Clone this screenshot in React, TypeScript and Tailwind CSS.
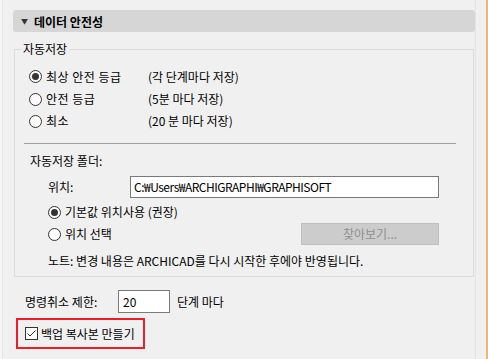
import React from "react";

const font = { fontFamily: '"Noto Sans CJK KR", "Liberation Sans", sans-serif' };

const Radio: React.FC<{ checked?: boolean }> = ({ checked }) => (
  <span className="w-[13px] h-[13px] rounded-full border border-[#333] bg-white flex items-center justify-center shrink-0">
    {checked && <span className="w-[7px] h-[7px] rounded-full bg-[#333]"></span>}
  </span>
);

const App: React.FC = () => {
  return (
    <div
      className="w-[488px] h-[359px] bg-[#f0f0f0] flex text-[12px] leading-[16px] text-black overflow-hidden"
      style={font}
    >
      <div className="w-[3px] h-full bg-[#f6f6f6] border-r border-[#e6e6e6]"></div>
      <div className="w-[473px] border-r border-[#e4e4e4] pl-[10px]">
        {/* Section header */}
        <div className="mt-[10px] h-[22px] w-[462px] bg-[#d6d6d6] rounded-[3px] flex items-center pt-[1px]">
          <span className="ml-[8px] text-[7px] leading-none text-[#333]">▼</span>
          <span className="ml-[6px] font-bold text-[12px]">데이터 안전성</span>
        </div>

        {/* Autosave group */}
        <fieldset className="mt-[9px] ml-[1px] w-[460px] h-[236px] border border-[#dcdcdc] p-0">
          <legend className="ml-[6px] px-[2px] leading-[16px]">자동저장</legend>
          <div className="mt-[8px] ml-[14px] flex flex-col">
            <div className="h-[23px] flex items-center">
              <Radio checked />
              <span className="ml-[4px] w-[102px] tracking-[0.5px]">최상 안전 등급</span>
              <span>(각 단계마다 저장)</span>
            </div>
            <div className="h-[22px] flex items-center">
              <Radio />
              <span className="ml-[4px] w-[102px] tracking-[0.5px]">안전 등급</span>
              <span>(5분 마다 저장)</span>
            </div>
            <div className="h-[22px] flex items-center">
              <Radio />
              <span className="ml-[4px] w-[102px] tracking-[0.5px]">최소</span>
              <span>(20 분 마다 저장)</span>
            </div>
          </div>
          <div className="mt-[11px] ml-[9px] w-[432px] h-px bg-[#a0a0a0]"></div>
          <div className="mt-[9px] ml-[15px] h-[16px]">자동저장 폴더:</div>
          <div className="mt-[7px] ml-[33px] flex items-center">
            <span className="w-[82px]">위치:</span>
            <div className="w-[309px] h-[22px] bg-white border border-[#7a7a7a] flex items-center pl-[3px] tracking-[-0.5px]">
              C:₩Users₩ARCHIGRAPHI₩GRAPHISOFT
            </div>
          </div>
          <div className="mt-[3px] ml-[33px] h-[22px] flex items-center">
            <Radio checked />
            <span className="ml-[4px]">기본값 위치사용 (권장)</span>
          </div>
          <div className="ml-[33px] h-[22px] flex items-center">
            <Radio />
            <span className="ml-[4px] w-[236px]">위치 선택</span>
            <div className="w-[138px] h-[22px] bg-[#cccccc] border border-[#bfbfbf] flex items-center justify-center text-[#8f8f8f]">
              찾아보기...
            </div>
          </div>
          <div className="mt-[8px] ml-[33px] h-[16px]">
            노트: 변경 내용은 ARCHICAD를 다시 시작한 후에야 반영됩니다.
          </div>
        </fieldset>

        {/* Undo limit */}
        <div className="mt-[13px] ml-[12px] flex items-center">
          <span className="w-[93px]">명령취소 제한:</span>
          <div className="w-[52px] h-[23px] bg-white border border-[#7a7a7a] flex items-center pl-[4px]">20</div>
          <span className="ml-[7px]">단계 마다</span>
        </div>

        {/* Backup */}
        <div className="mt-[5px] ml-[3px] w-[129px] h-[31px] border-2 border-[#ee1c25] flex items-center">
          <span className="ml-[7px] w-[13px] h-[13px] border border-[#333] bg-white flex items-center justify-center">
            <svg width="11" height="11" viewBox="0 0 11 11" fill="none">
              <path d="M1.5 5.5 L4 8 L9.5 2.5" stroke="#333" strokeWidth="1" />
            </svg>
          </span>
          <span className="ml-[3px]">백업 복사본 만들기</span>
        </div>
      </div>
      <div className="flex-1"></div>
      <div className="w-[2px] h-full bg-[#e9b77a]"></div>
    </div>
  );
};

export default App;
